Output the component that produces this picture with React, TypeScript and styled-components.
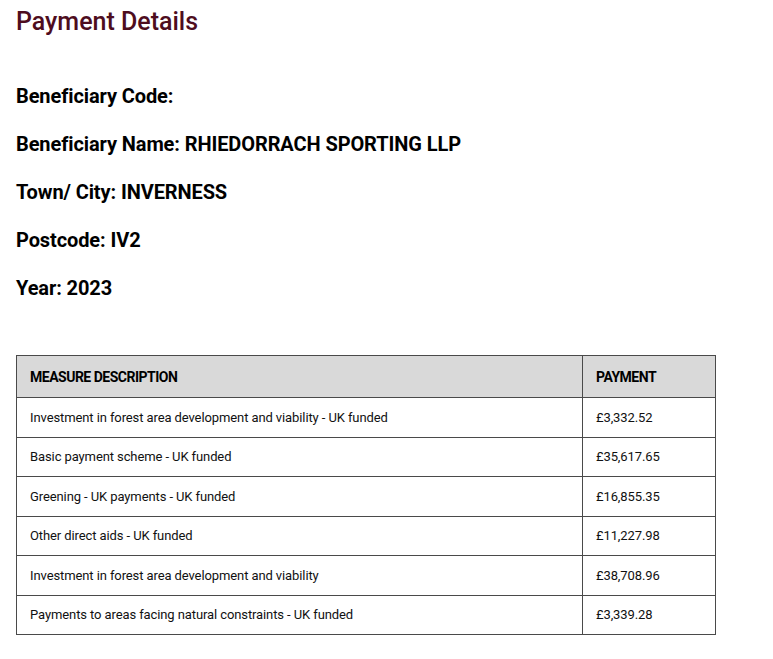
import React from 'react';
import styled, { createGlobalStyle } from 'styled-components';

const GlobalStyle = createGlobalStyle`
  body {
    margin: 0;
    background: #fff;
    font-family: Roboto, "Liberation Sans", Arial, sans-serif;
    color: #000;
  }
`;

const Page = styled.div`
  padding: 0 16px;
`;

const Title = styled.h2`
  margin: 0;
  padding-top: 8px;
  font-size: 25px;
  line-height: 28px;
  font-weight: 500;
  color: #4e0d1e;
`;

const Details = styled.div`
  margin-top: 36px;
  display: flex;
  flex-direction: column;
`;

const Field = styled.div`
  font-size: 20px;
  line-height: 48px;
  font-weight: 700;
  letter-spacing: -0.1px;
`;

const Table = styled.table`
  margin-top: 43px;
  width: 700px;
  table-layout: fixed;
  border-collapse: collapse;
  font-size: 13px;
  letter-spacing: -0.1px;
`;

const HeadCell = styled.th`
  background: #d9d9d9;
  border: 1px solid #4a4a4a;
  height: 41px;
  padding: 0 0 0 13px;
  text-align: left;
  font-weight: 700;
  font-size: 14px;
  letter-spacing: -0.5px;
`;

const Cell = styled.td`
  border: 1px solid #4a4a4a;
  height: 38.5px;
  padding: 0 0 0 13px;
  color: #111;
`;

const rows: [string, string][] = [
  ['Investment in forest area development and viability - UK funded', '£3,332.52'],
  ['Basic payment scheme - UK funded', '£35,617.65'],
  ['Greening - UK payments - UK funded', '£16,855.35'],
  ['Other direct aids - UK funded', '£11,227.98'],
  ['Investment in forest area development and viability', '£38,708.96'],
  ['Payments to areas facing natural constraints - UK funded', '£3,339.28'],
];

const App: React.FC = () => (
  <>
    <GlobalStyle />
    <Page>
      <Title>Payment Details</Title>
      <Details>
        <Field>Beneficiary Code:</Field>
        <Field>Beneficiary Name: RHIEDORRACH SPORTING LLP</Field>
        <Field>Town/ City: INVERNESS</Field>
        <Field>Postcode: IV2</Field>
        <Field>Year: 2023</Field>
      </Details>
      <Table>
        <colgroup>
          <col style={{ width: 566 }} />
          <col />
        </colgroup>
        <thead>
          <tr>
            <HeadCell>MEASURE DESCRIPTION</HeadCell>
            <HeadCell>PAYMENT</HeadCell>
          </tr>
        </thead>
        <tbody>
          {rows.map(([desc, amount], i) => (
            <tr key={i}>
              <Cell>{desc}</Cell>
              <Cell>{amount}</Cell>
            </tr>
          ))}
        </tbody>
      </Table>
    </Page>
  </>
);

export default App;
